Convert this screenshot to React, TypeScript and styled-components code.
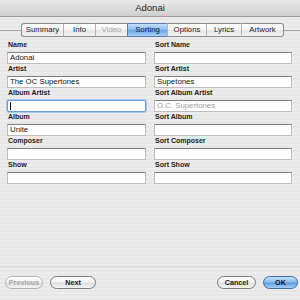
import styled, { createGlobalStyle, css } from "styled-components";

const GlobalStyle = createGlobalStyle`
    html, body {
        margin: 0;
        padding: 0;
    }
    body {
        width: 300px;
        height: 300px;
        overflow: hidden;
        font-family: "Liberation Sans", Arial, sans-serif;
        color: #111;
    }
`;

type FieldData = { label: string; value?: string; placeholder?: boolean; focused?: boolean };

const leftFields: FieldData[] = [
    { label: 'Name', value: 'Adonai' },
    { label: 'Artist', value: 'The OC Supertones' },
    { label: 'Album Artist', focused: true },
    { label: 'Album', value: 'Unite' },
    { label: 'Composer' },
    { label: 'Show' },
];

const rightFields: FieldData[] = [
    { label: 'Sort Name' },
    { label: 'Sort Artist', value: 'Supetones' },
    { label: 'Sort Album Artist', value: 'O.C. Supertones', placeholder: true },
    { label: 'Sort Album' },
    { label: 'Sort Composer' },
    { label: 'Sort Show' },
];

const tabs = [
    { name: 'Summary', width: 42 },
    { name: 'Info', width: 32 },
    { name: 'Video', width: 32, disabled: true },
    { name: 'Sorting', width: 40, selected: true },
    { name: 'Options', width: 39 },
    { name: 'Lyrics', width: 35 },
    { name: 'Artwork', width: 43 },
];

const App = () => {
    const rows = leftFields.map((f, i) => [f, rightFields[i]]).flat();
    return (
        <>
            <GlobalStyle />
            <Window>
                <TitleBar>Adonai</TitleBar>
                <TabHeader>
                    <Rule width={21} />
                    <TabStrip>
                        {tabs.map((t, i) => (
                            <Tab
                                key={t.name}
                                width={t.width}
                                first={i === 0}
                                last={i === tabs.length - 1}
                                selected={!!t.selected}
                                disabled={!!t.disabled}
                            >{t.name}</Tab>
                        ))}
                    </TabStrip>
                    <Rule />
                </TabHeader>
                <Panel>
                    <FieldGrid>
                        {rows.map((f, i) => (
                            <FieldBlock key={i}>
                                <FieldLabel>{f.label}</FieldLabel>
                                <TextField focused={!!f.focused} dimmed={!!f.placeholder}>
                                    {f.focused ? <Caret /> : f.value}
                                </TextField>
                            </FieldBlock>
                        ))}
                    </FieldGrid>
                </Panel>
                <Footer>
                    <ButtonGroup>
                        <PillButton width={38} disabled>Previous</PillButton>
                        <PillButton width={46}>Next</PillButton>
                    </ButtonGroup>
                    <ButtonGroup>
                        <PillButton width={39}>Cancel</PillButton>
                        <PillButton width={35} primary>OK</PillButton>
                    </ButtonGroup>
                </Footer>
            </Window>
        </>
    );
}

export default App;


const Window = styled.div`
    display: flex;
    flex-direction: column;
    width: 300px;
    height: 300px;
    background: repeating-linear-gradient(180deg, #ececec 0px, #ececec 2px, #e7e7e7 2px, #e7e7e7 4px);
`;

const TitleBar = styled.div`
    flex: none;
    height: 16px;
    line-height: 16px;
    text-align: center;
    font-size: 9.5px;
    color: #222;
    background: linear-gradient(180deg, #e9e9e9 0%, #dadada 60%, #cdcdcd 100%);
    border-bottom: 1px solid #9a9a9a;
`;

const TabHeader = styled.div`
    flex: none;
    display: flex;
    align-items: center;
    height: 14px;
    margin-top: 6px;
`;

const Rule = styled.div<{ width?: number }>`
    height: 1px;
    background-color: #a9a9a9;
    ${props => props.width ? css`width: ${props.width}px; flex: none;` : css`flex: 1;`}
`;

const TabStrip = styled.div`
    display: flex;
    height: 14px;
`;

const Tab = styled.div<{
    width: number;
    first: boolean;
    last: boolean;
    selected: boolean;
    disabled: boolean;
}>`
    width: ${props => props.width}px;
    height: 14px;
    box-sizing: border-box;
    font-size: 7.8px;
    line-height: 12px;
    text-align: center;
    color: ${props => props.disabled ? '#a9a9a9' : '#1a1a1a'};
    background: linear-gradient(180deg, #ffffff 0%, #f4f4f4 50%, #e6e6e6 51%, #f2f2f2 100%);
    border-top: 1px solid #8e8e8e;
    border-bottom: 1px solid #8e8e8e;
    border-left: 1px solid ${props => props.first ? '#8e8e8e' : '#b3b3b3'};
    ${props => props.first && css`border-radius: 3px 0 0 3px;`}
    ${props => props.last && css`
        border-right: 1px solid #8e8e8e;
        border-radius: 0 3px 3px 0;
    `}
    ${props => props.selected && css`
        background: linear-gradient(180deg, #c4defa 0%, #8fbff2 45%, #6aa6ea 52%, #a6d0f8 100%);
        border-top-color: #5a7fae;
        border-bottom-color: #5a7fae;
        border-left-color: #5a7fae;
        color: #0c1a2a;
    `}
`;

const Panel = styled.div`
    flex: none;
    height: 230px;
    box-sizing: border-box;
    padding: 4px 0 0 7px;
    border-bottom: 1px solid #d9d9d9;
`;

const FieldGrid = styled.div`
    display: grid;
    grid-template-columns: 139px 138px;
    column-gap: 8px;
    row-gap: 1px;
`;

const FieldBlock = styled.div`
    display: flex;
    flex-direction: column;
`;

const FieldLabel = styled.div`
    height: 8px;
    line-height: 8px;
    font-size: 7px;
    font-weight: 700;
    color: #1c1c1c;
    padding-left: 1px;
    margin-bottom: 3px;
    white-space: nowrap;
`;

const TextField = styled.div<{ focused: boolean; dimmed: boolean }>`
    position: relative;
    height: 12px;
    box-sizing: border-box;
    background-color: #ffffff;
    border: 1px solid #bdbdbd;
    border-top-color: #7f7f7f;
    font-size: 7.8px;
    line-height: 10px;
    padding: 0 2px;
    white-space: nowrap;
    color: ${props => props.dimmed ? '#9c9c9c' : '#141414'};
    ${props => props.focused && css`
        border: 1px solid #6f9bd3;
        border-radius: 2px;
        box-shadow: 0 0 0 1px #a9c8ee;
    `}
`;

const Caret = styled.span`
    position: absolute;
    left: 2px;
    top: 1px;
    width: 1px;
    height: 8px;
    background-color: #000;
`;

const Footer = styled.div`
    flex: none;
    display: flex;
    justify-content: space-between;
    padding: 9px 2px 0 5px;
`;

const ButtonGroup = styled.div`
    display: flex;
    gap: 7px;
`;

const PillButton = styled.div<{ width: number; disabled?: boolean; primary?: boolean }>`
    width: ${props => props.width}px;
    height: 13px;
    box-sizing: border-box;
    border-radius: 7px;
    border: 1px solid #7c7c7c;
    background: linear-gradient(180deg, #ffffff 0%, #f3f3f3 45%, #dedede 55%, #f6f6f6 100%);
    font-size: 7.2px;
    font-weight: 700;
    line-height: 11px;
    text-align: center;
    color: #1a1a1a;
    ${props => props.disabled && css`
        color: #a5a5a5;
        border-color: #b4b4b4;
    `}
    ${props => props.primary && css`
        border-color: #3f6da8;
        background: linear-gradient(180deg, #c6e0fb 0%, #8dbdf2 45%, #5d9ae6 55%, #a9d2fa 100%);
        color: #0d1622;
    `}
`;
